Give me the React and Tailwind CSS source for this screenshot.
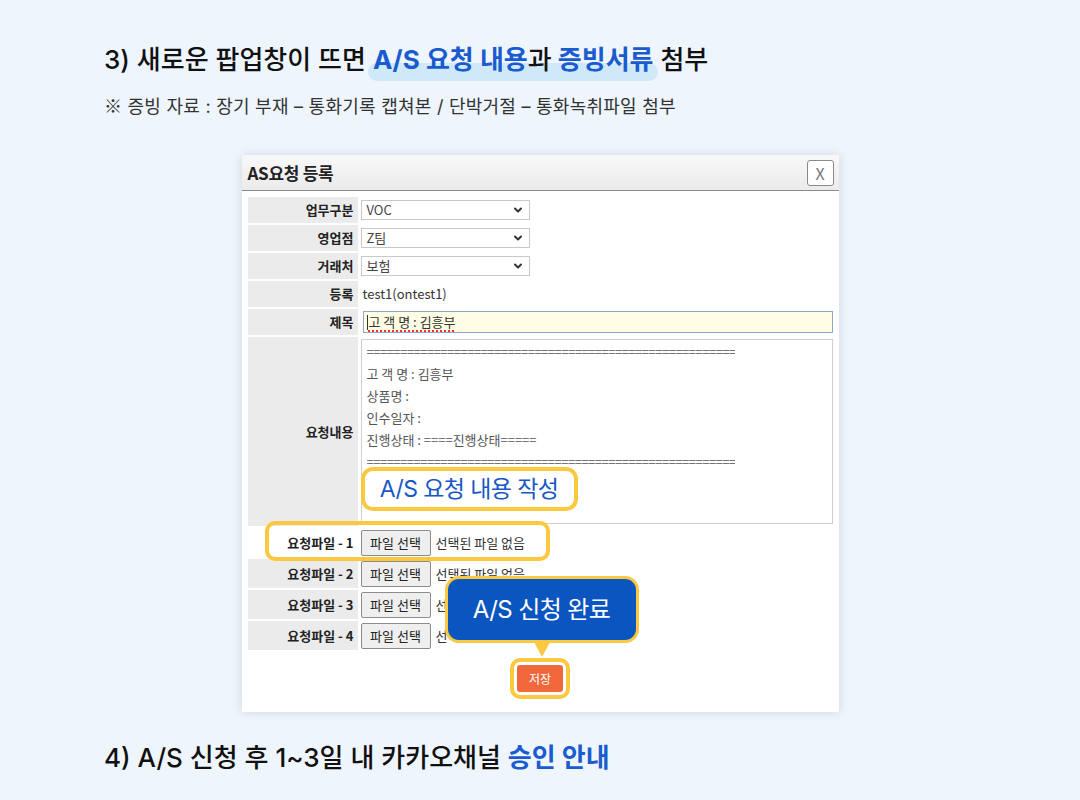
import { ChevronDown } from 'lucide-react';

const HEAD_FONT = { fontFamily: 'Inter, "Noto Sans CJK KR", sans-serif' };
const FORM_FONT = { fontFamily: '"Noto Sans CJK KR", sans-serif' };

const SELECTS = [
  { label: '업무구분', value: 'VOC' },
  { label: '영업점', value: 'Z팀' },
  { label: '거래처', value: '보험' },
];

const BODY_LINES = ['고 객 명 : 김흥부', '상품명 :', '인수일자 :', '진행상태 : ====진행상태====='];

function Label({ children, white }) {
  return (
    <div
      className={`flex items-center justify-end pr-[4px] text-[13px] font-bold text-[#222] ${white ? 'bg-white' : 'bg-[#ebebeb]'}`}
    >
      {children}
    </div>
  );
}

function Select({ value }) {
  return (
    <div className="flex h-[20px] w-[169px] items-center justify-between border border-[#c8c8c8] bg-white pl-[5px] pr-[5px] text-[13px] text-[#444]">
      <span>{value}</span>
      <ChevronDown size={12} strokeWidth={4} className="text-[#333]" />
    </div>
  );
}

function FileRow({ n }) {
  return (
    <>
      <Label white={n === 1}>요청파일 - {n}</Label>
      <div className="flex h-[29px] items-center text-[13px] text-[#333]">
        <div className="flex h-[26px] w-[70px] items-center justify-center rounded-[2px] border border-[#8c8c8c] bg-[#efefef] text-[#222]">
          파일 선택
        </div>
        <span className="ml-[5px]">선택된 파일 없음</span>
      </div>
    </>
  );
}

function Popup() {
  return (
    <div
      className="relative mx-auto w-[597px] bg-white shadow-[0_0_10px_rgba(0,0,0,0.13)]"
      style={FORM_FONT}
    >
      {/* header */}
      <div className="flex h-[36px] items-center justify-between border-b border-[#8a8a8a] bg-gradient-to-b from-[#f8f8f8] to-[#ebebeb] pl-[6px] pr-[5px]">
        <span className="text-[17px] font-bold tracking-[-0.3px] text-[#222]">AS요청 등록</span>
        <div className="flex h-[26px] w-[27px] items-center justify-center rounded-[3px] border border-[#8a8a8a] bg-white text-[16px] text-[#777]">
          X
        </div>
      </div>

      {/* form */}
      <div className="px-[6px] pt-[6px] pb-[13px]">
        <div className="grid grid-cols-[110px_1fr] gap-x-[3px] gap-y-[2px]">
          {SELECTS.map((s) => (
            <div key={s.label} className="contents">
              <Label>{s.label}</Label>
              <div className="flex h-[26px] items-center">
                <Select value={s.value} />
              </div>
            </div>
          ))}

          <Label>등록</Label>
          <div className="flex h-[26px] items-center pl-[2px] text-[13px] text-[#333]">test1(ontest1)</div>

          <Label>제목</Label>
          <div className="flex h-[26px] items-center pl-[2px]">
            <div className="flex h-[22px] w-full items-center border border-[#8fa8c8] bg-[#fffde4] pl-[3px] text-[13px] text-[#333]">
              <span className="mr-[1px] h-[15px] w-px bg-[#333]" />
              <span className="underline decoration-red-500 decoration-dotted decoration-[1.5px] underline-offset-[3px]">
                고 객 명 : 김흥부
              </span>
            </div>
          </div>

          <Label>요청내용</Label>
          <div className="flex h-[189px] py-[2px]">
            <div className="w-full border border-[#cfcfcf] bg-white pl-[5px] pt-[1px] text-[13px] leading-[22px] text-[#555]">
              <div className="w-[368px] overflow-hidden whitespace-nowrap tracking-[-0.5px]">
                {'='.repeat(58)}
              </div>
              {BODY_LINES.map((l) => (
                <div key={l}>{l}</div>
              ))}
              <div className="w-[368px] overflow-hidden whitespace-nowrap tracking-[-0.5px]">
                {'='.repeat(58)}
              </div>
            </div>
          </div>

          {[1, 2, 3, 4].map((n) => (
            <FileRow key={n} n={n} />
          ))}
        </div>

        <div className="mt-[8px] flex justify-center">
          <div className="rounded-[10px] border-[4px] border-[#fcc83f] bg-white p-[3px]">
            <div className="flex h-[27px] w-[46px] items-center justify-center rounded-[3px] bg-[#f0683c] text-[12px] text-white">
              저장
            </div>
          </div>
        </div>
      </div>

      {/* annotations */}
      <div
        className="absolute left-[119px] top-[312px] flex h-[44px] w-[217px] items-center justify-center rounded-[12px] border-[4px] border-[#fcc83f] bg-white text-[23px] tracking-[-0.6px] text-[#1857c6]"
        style={HEAD_FONT}
      >
        A/S 요청 내용 작성
      </div>
      <div className="absolute left-[23px] top-[366px] h-[40px] w-[285px] rounded-[10px] border-[4px] border-[#fcc83f]" />
      <div className="absolute left-[292px] top-[487px] h-0 w-0 border-l-[8px] border-r-[8px] border-t-[15px] border-l-transparent border-r-transparent border-t-[#fcc83f]" />
      <div
        className="absolute left-[203px] top-[421px] flex h-[67px] w-[194px] items-center justify-center rounded-[14px] border-[3px] border-[#fcc83f] bg-[#0b55c1] text-[24px] tracking-[-0.6px] text-white"
        style={HEAD_FONT}
      >
        A/S 신청 완료
      </div>
    </div>
  );
}

export default function App() {
  return (
    <div className="min-h-screen bg-[#eef5fd] pt-[43px] pb-[20px]" style={HEAD_FONT}>
      <div className="pl-[104px]">
        <h1 className="text-[26px] font-medium leading-[34px] text-[#111]">
          3) 새로운 팝업창이 뜨면{' '}
          <span className="relative font-bold text-[#1a5ccf]">
            <span className="absolute -left-[5px] -right-[4px] top-[19px] h-[18px] rounded-full bg-[#cfe9f9]" />
            <span className="relative">A/S 요청 내용</span>
            <span className="relative font-medium text-[#111]">과</span>{' '}
            <span className="relative">증빙서류</span>
          </span>{' '}
          첨부
        </h1>
        <p className="mt-[16px] text-[18px] leading-[24px] tracking-[0.25px] text-[#333]">
          <span style={FORM_FONT}>※</span> 증빙 자료 : 장기 부재 – 통화기록 캡쳐본 / 단박거절 – 통화녹취파일 첨부
        </p>
      </div>

      <div className="mt-[36px]">
        <Popup />
      </div>

      <h2 className="mt-[29px] pl-[104px] text-[26px] font-medium leading-[34px] text-[#111]">
        4) A/S 신청 후 1~3일 내 카카오채널 <span className="font-bold text-[#1a5ccf]">승인 안내</span>
      </h2>
    </div>
  );
}
